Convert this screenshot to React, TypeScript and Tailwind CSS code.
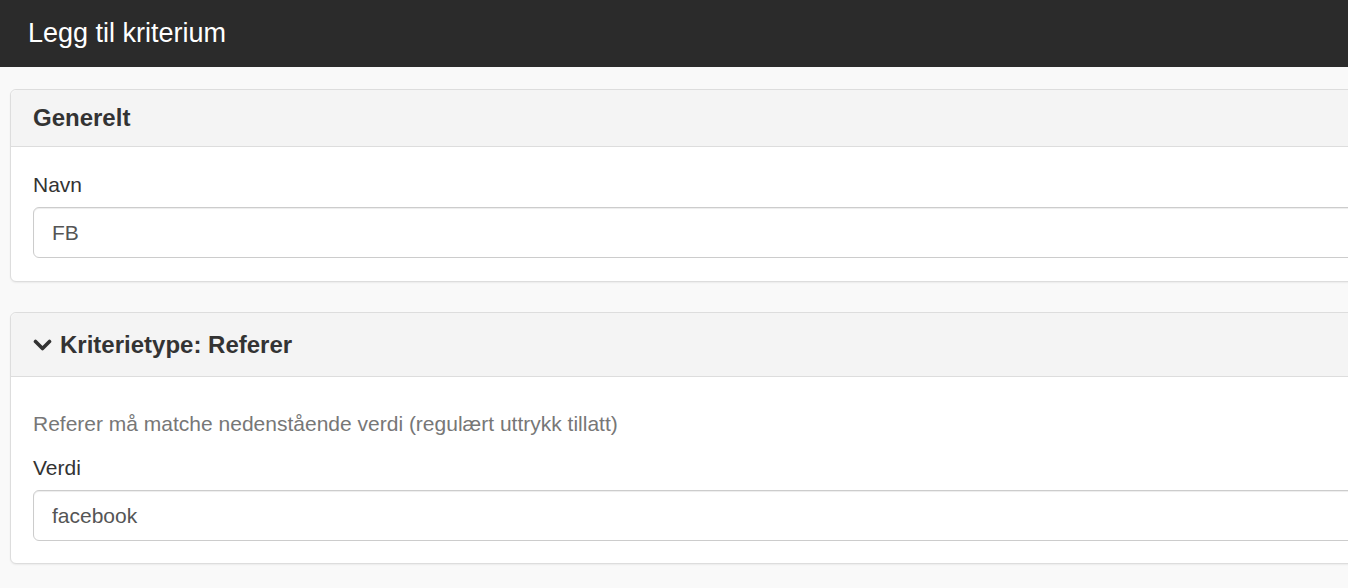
import React from "react";

const ChevronDown = () => (
  <svg width="19" height="14" viewBox="0 0 19 14" className="mr-[8px] shrink-0">
    <path d="M2.5 3.5 L9.5 10.5 L16.5 3.5" fill="none" stroke="#333" strokeWidth="3.6" strokeLinecap="round" strokeLinejoin="round" />
  </svg>
);

const Panel = ({
  heading,
  headerClass,
  children,
}: {
  heading: React.ReactNode;
  headerClass: string;
  children: React.ReactNode;
}) => (
  <div className="mb-[30px] rounded-[6px] border border-[#dddddd] bg-white shadow-[0_1px_2px_rgba(0,0,0,0.06)]">
    <div
      className={`flex items-center rounded-t-[6px] border-b border-[#dddddd] bg-[#f4f4f4] px-[22px] ${headerClass}`}
    >
      <h3 className="flex items-center text-[24px] font-bold text-[#333333]">{heading}</h3>
    </div>
    {children}
  </div>
);

const Field = ({ label, value }: { label: string; value: string }) => (
  <div>
    <label className="mb-[7px] block text-[21px] leading-[30px] text-[#333333]">{label}</label>
    <input
      readOnly
      value={value}
      className="block h-[51px] w-full rounded-[6px] border border-[#cccccc] bg-white px-[18px] text-[21px] text-[#555555] shadow-[inset_0_1px_1px_rgba(0,0,0,0.075)] outline-none"
    />
  </div>
);

export default function App() {
  return (
    <div
      className="h-screen w-full overflow-hidden bg-[#f9f9f9]"
      style={{ fontFamily: '"Liberation Sans", Arial, sans-serif' }}
    >
      <div className="flex h-[67px] items-center bg-[#2b2b2b] px-[28px]">
        <h1 className="text-[27px] text-white">Legg til kriterium</h1>
      </div>

      <div className="w-[1420px] px-[10px] pt-[22px]">
        <Panel heading="Generelt" headerClass="h-[57px]">
          <div className="px-[22px] pb-[23px] pt-[23px]">
            <Field label="Navn" value="FB" />
          </div>
        </Panel>

        <Panel
          heading={
            <>
              <ChevronDown />
              Kriterietype: Referer
            </>
          }
          headerClass="h-[64px]"
        >
          <div className="px-[22px] pb-[22px] pt-[32px]">
            <p className="mb-[14px] text-[21px] leading-[30px] text-[#777777]">
              Referer må matche nedenstående verdi (regulært uttrykk tillatt)
            </p>
            <Field label="Verdi" value="facebook" />
          </div>
        </Panel>
      </div>
    </div>
  );
}
